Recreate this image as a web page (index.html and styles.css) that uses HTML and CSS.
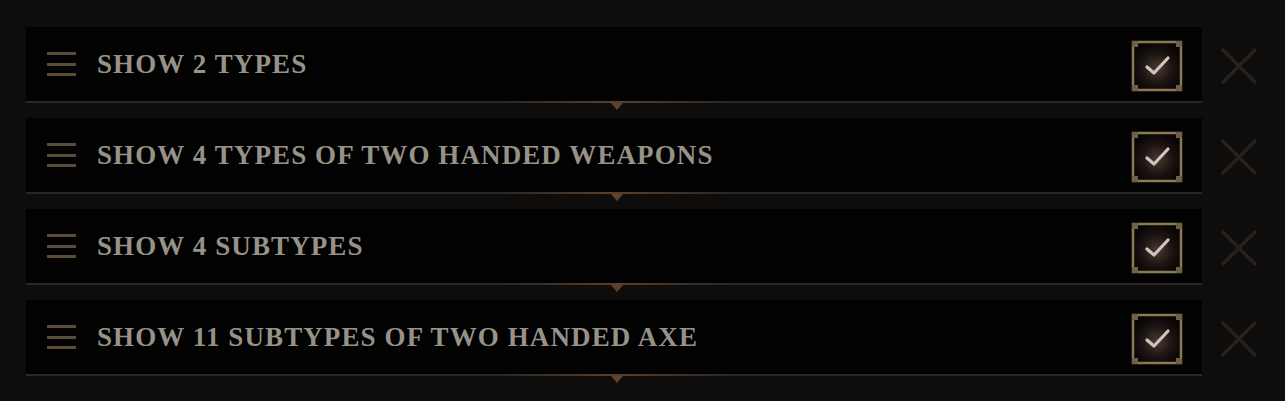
FILE: index.html
```html
<!DOCTYPE html>
<html>
<head>
    <title>Filter Rules</title>
    <link rel="stylesheet" href="styles.css">
</head>
<body>
    <div class="rules">
        <div class="rule">
            <div class="rule-bar">
                <span class="grip"><i></i><i></i><i></i></span>
                <span class="rule-name">Show 2 Types</span>
                <span class="check">
                    <svg width="52" height="52" viewBox="0 0 52 52">
                        <defs>
                            <radialGradient id="glow1" cx="50%" cy="55%" r="55%">
                                <stop offset="0%" stop-color="#4a3a31"/>
                                <stop offset="60%" stop-color="#1a1311"/>
                                <stop offset="100%" stop-color="#080605"/>
                            </radialGradient>
                        </defs>
                        <rect x="2" y="2" width="48" height="48" fill="url(#glow1)" stroke="#8a7857" stroke-width="2.5"/>
                        <rect x="1" y="1" width="6" height="6" fill="#6f6045"/>
                        <rect x="45" y="1" width="6" height="6" fill="#6f6045"/>
                        <rect x="1" y="45" width="6" height="6" fill="#6f6045"/>
                        <rect x="45" y="45" width="6" height="6" fill="#6f6045"/>
                        <path d="M16 27 L23 33 L37 18" fill="none" stroke="#cfc5ba" stroke-width="3.2" stroke-linecap="round" stroke-linejoin="round"/>
                    </svg>
                </span>
            </div>
            <span class="remove">
                <svg width="38" height="38" viewBox="0 0 38 38"><path d="M2 2 L36 36 M36 2 L2 36" stroke="#252220" stroke-width="3.5"/></svg>
            </span>
        </div>

        <div class="rule">
            <div class="rule-bar">
                <span class="grip"><i></i><i></i><i></i></span>
                <span class="rule-name">Show 4 Types of Two Handed Weapons</span>
                <span class="check">
                    <svg width="52" height="52" viewBox="0 0 52 52">
                        <defs>
                            <radialGradient id="glow2" cx="50%" cy="55%" r="55%">
                                <stop offset="0%" stop-color="#4a3a31"/>
                                <stop offset="60%" stop-color="#1a1311"/>
                                <stop offset="100%" stop-color="#080605"/>
                            </radialGradient>
                        </defs>
                        <rect x="2" y="2" width="48" height="48" fill="url(#glow2)" stroke="#8a7857" stroke-width="2.5"/>
                        <rect x="1" y="1" width="6" height="6" fill="#6f6045"/>
                        <rect x="45" y="1" width="6" height="6" fill="#6f6045"/>
                        <rect x="1" y="45" width="6" height="6" fill="#6f6045"/>
                        <rect x="45" y="45" width="6" height="6" fill="#6f6045"/>
                        <path d="M16 27 L23 33 L37 18" fill="none" stroke="#cfc5ba" stroke-width="3.2" stroke-linecap="round" stroke-linejoin="round"/>
                    </svg>
                </span>
            </div>
            <span class="remove">
                <svg width="38" height="38" viewBox="0 0 38 38"><path d="M2 2 L36 36 M36 2 L2 36" stroke="#252220" stroke-width="3.5"/></svg>
            </span>
        </div>

        <div class="rule">
            <div class="rule-bar">
                <span class="grip"><i></i><i></i><i></i></span>
                <span class="rule-name">Show 4 Subtypes</span>
                <span class="check">
                    <svg width="52" height="52" viewBox="0 0 52 52">
                        <defs>
                            <radialGradient id="glow3" cx="50%" cy="55%" r="55%">
                                <stop offset="0%" stop-color="#4a3a31"/>
                                <stop offset="60%" stop-color="#1a1311"/>
                                <stop offset="100%" stop-color="#080605"/>
                            </radialGradient>
                        </defs>
                        <rect x="2" y="2" width="48" height="48" fill="url(#glow3)" stroke="#8a7857" stroke-width="2.5"/>
                        <rect x="1" y="1" width="6" height="6" fill="#6f6045"/>
                        <rect x="45" y="1" width="6" height="6" fill="#6f6045"/>
                        <rect x="1" y="45" width="6" height="6" fill="#6f6045"/>
                        <rect x="45" y="45" width="6" height="6" fill="#6f6045"/>
                        <path d="M16 27 L23 33 L37 18" fill="none" stroke="#cfc5ba" stroke-width="3.2" stroke-linecap="round" stroke-linejoin="round"/>
                    </svg>
                </span>
            </div>
            <span class="remove">
                <svg width="38" height="38" viewBox="0 0 38 38"><path d="M2 2 L36 36 M36 2 L2 36" stroke="#252220" stroke-width="3.5"/></svg>
            </span>
        </div>

        <div class="rule">
            <div class="rule-bar">
                <span class="grip"><i></i><i></i><i></i></span>
                <span class="rule-name">Show 11 Subtypes of Two Handed Axe</span>
                <span class="check">
                    <svg width="52" height="52" viewBox="0 0 52 52">
                        <defs>
                            <radialGradient id="glow4" cx="50%" cy="55%" r="55%">
                                <stop offset="0%" stop-color="#4a3a31"/>
                                <stop offset="60%" stop-color="#1a1311"/>
                                <stop offset="100%" stop-color="#080605"/>
                            </radialGradient>
                        </defs>
                        <rect x="2" y="2" width="48" height="48" fill="url(#glow4)" stroke="#8a7857" stroke-width="2.5"/>
                        <rect x="1" y="1" width="6" height="6" fill="#6f6045"/>
                        <rect x="45" y="1" width="6" height="6" fill="#6f6045"/>
                        <rect x="1" y="45" width="6" height="6" fill="#6f6045"/>
                        <rect x="45" y="45" width="6" height="6" fill="#6f6045"/>
                        <path d="M16 27 L23 33 L37 18" fill="none" stroke="#cfc5ba" stroke-width="3.2" stroke-linecap="round" stroke-linejoin="round"/>
                    </svg>
                </span>
            </div>
            <span class="remove">
                <svg width="38" height="38" viewBox="0 0 38 38"><path d="M2 2 L36 36 M36 2 L2 36" stroke="#252220" stroke-width="3.5"/></svg>
            </span>
        </div>
    </div>
</body>
</html>
```

FILE: styles.css
```css
body {
    margin: 0;
    height: 401px;
    overflow: hidden;
    background-color: #0f0d0c;
    font-family: "Liberation Serif", "DejaVu Serif", serif;
}

.rules {
    display: flex;
    flex-direction: column;
    gap: 15px;
    padding: 27px 0 0 26px;
}

.rule {
    display: flex;
    align-items: center;
}

.rule-bar {
    position: relative;
    display: flex;
    align-items: center;
    width: 1176px;
    height: 76px;
    box-sizing: border-box;
    padding: 0 19px 0 21px;
    background-color: #020202;
    border-bottom: 2px solid #2a2826;
}

/* little gold notch under each row */
.rule-bar::before {
    content: "";
    position: absolute;
    left: 480px;
    bottom: -2px;
    width: 220px;
    height: 2px;
    background: linear-gradient(to right, rgba(90, 64, 44, 0), #5a402c 50%, rgba(90, 64, 44, 0));
}

.rule-bar::after {
    content: "";
    position: absolute;
    left: 585px;
    bottom: -9px;
    width: 0;
    height: 0;
    border-left: 6px solid transparent;
    border-right: 6px solid transparent;
    border-top: 7px solid #5c4330;
}

.grip {
    display: flex;
    flex-direction: column;
    gap: 7.5px;
    width: 29px;
    margin-right: 21px;
}

.grip i {
    display: block;
    height: 3px;
    background-color: #5b4c3a;
}

.rule-name {
    flex: 1;
    font-size: 27px;
    font-weight: bold;
    letter-spacing: 1.1px;
    text-transform: uppercase;
    color: #979287;
    text-shadow: 0 0 2px rgba(0, 0, 0, 0.8);
}

.check {
    display: flex;
    margin-top: 3px;
}

.remove {
    display: flex;
    margin-left: 18px;
    margin-top: 2px;
}
```
